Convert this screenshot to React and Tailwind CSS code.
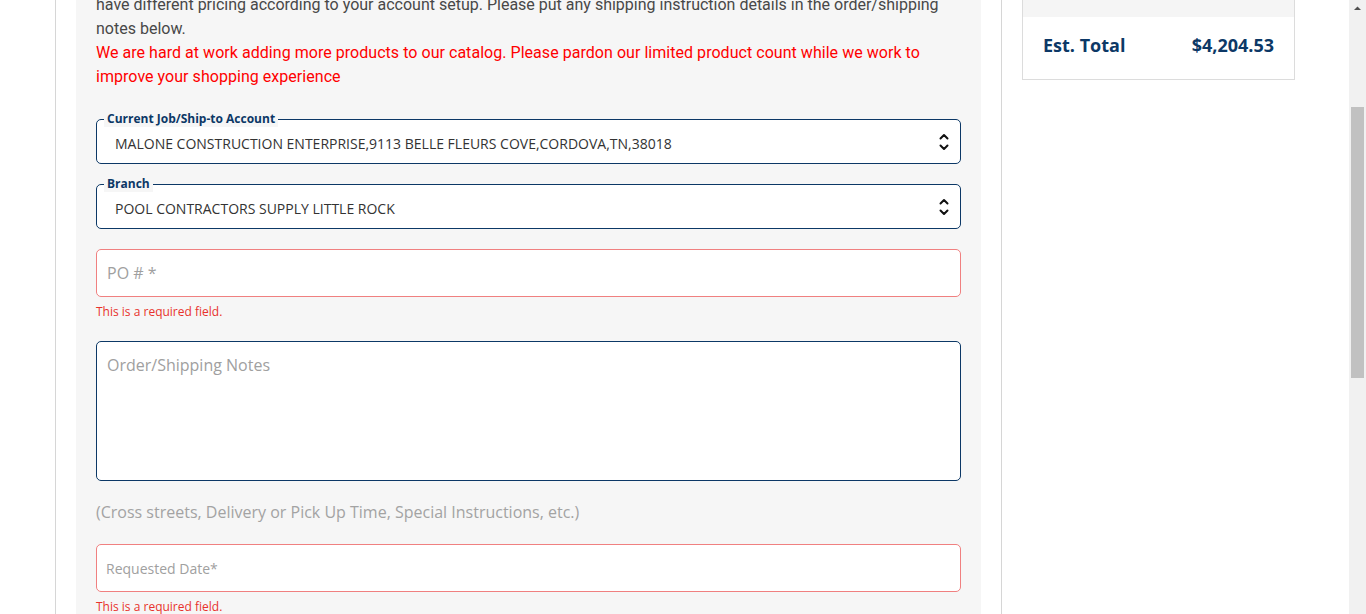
import React from "react";

const navy = "border-[#0c3866]";

function Chevrons() {
  return (
    <svg width="12" height="20" viewBox="0 0 12 20" className="shrink-0">
      <path d="M2.5 6.5 L6 3 L9.5 6.5" fill="none" stroke="#111" strokeWidth="2" strokeLinecap="round" strokeLinejoin="round" />
      <path d="M2.5 13.5 L6 17 L9.5 13.5" fill="none" stroke="#111" strokeWidth="2" strokeLinecap="round" strokeLinejoin="round" />
    </svg>
  );
}

function SelectField({ label, value }) {
  return (
    <div className={`relative h-[45px] rounded-[5px] border ${navy} bg-white flex items-center pl-[18px] pr-[10px]`}>
      <span className="absolute left-[7px] top-[-9px] bg-[#f6f6f6] px-[3px] text-[12px] leading-[16px] font-bold text-[#0c3866]">
        {label}
      </span>
      <span className="flex-1 pt-[3px] text-[14px] text-[#333]">{value}</span>
      <Chevrons />
    </div>
  );
}

function ErrorText() {
  return <p className="mt-[7px] text-[12px] leading-[16px] text-[#e8322c]">This is a required field.</p>;
}

export default function App() {
  return (
    <div className="h-[614px] overflow-hidden bg-white flex" style={{ fontFamily: "'Open Sans', sans-serif" }}>
      <div className="flex-1 flex min-w-0">
        <div className="w-[55px] shrink-0" />
        <div className="w-[947px] shrink-0 border-x border-[#d6d6d6] px-[20px]">
          <div className="bg-[#f6f6f6] px-[20px] -mt-[7px] pb-[40px]">
            <div className="text-[16px] leading-[24px]" style={{ fontFamily: "Roboto, sans-serif" }}>
              <p className="text-[#484848]">
                have different pricing according to your account setup. Please put any shipping instruction details in the order/shipping
                <br />
                notes below.
              </p>
              <p className="text-[#ff0000] tracking-[0.04px]">
                We are hard at work adding more products to our catalog. Please pardon our limited product count while we work to
                <br />
                improve your shopping experience
              </p>
            </div>

            <div className="mt-[30px] flex flex-col gap-[20px]">
              <SelectField
                label="Current Job/Ship-to Account"
                value="MALONE CONSTRUCTION ENTERPRISE,9113 BELLE FLEURS COVE,CORDOVA,TN,38018"
              />
              <SelectField label="Branch" value="POOL CONTRACTORS SUPPLY LITTLE ROCK" />
            </div>

            <div className="mt-[20px]">
              <div className="h-[48px] rounded-[5px] border border-[#f08080] bg-white flex items-center px-[10px] text-[16px] text-[#a0a0a0]">
                PO # *
              </div>
              <ErrorText />
            </div>

            <div className={`mt-[21px] h-[140px] rounded-[5px] border ${navy} bg-white px-[10px] pt-[12px] text-[16px] leading-[22px] text-[#a0a0a0]`}>
              Order/Shipping Notes
            </div>

            <p className="mt-[20px] text-[16px] leading-[22px] text-[#a3a3a3]">
              (Cross streets, Delivery or Pick Up Time, Special Instructions, etc.)
            </p>

            <div className="mt-[21px]">
              <div className="h-[48px] rounded-[5px] border border-[#f08080] bg-white flex items-center px-[9px] text-[14px] text-[#a0a0a0]">
                Requested Date*
              </div>
              <ErrorText />
            </div>
          </div>
        </div>
        <div className="flex-1 pl-[20px]">
          <div className="w-[273px] border-x border-b border-[#dcdcdc] bg-white">
            <div className="h-[17px] bg-[#f5f5f5]" />
            <div className="flex items-center justify-between px-[20px] pt-[14px] pb-[20px] text-[18px] leading-[28px] font-bold text-[#0c3866]">
              <span>Est. Total</span>
              <span>$4,204.53</span>
            </div>
          </div>
        </div>
      </div>

      <div className="w-[17px] shrink-0 bg-[#f1f1f1] flex flex-col items-center">
        <svg width="17" height="17" viewBox="0 0 17 17">
          <path d="M5 10 L8.5 6.5 L12 10 Z" fill="#505050" />
        </svg>
        <div className="mt-[90px] w-[13px] h-[271px] bg-[#c1c1c1]" />
      </div>
    </div>
  );
}
